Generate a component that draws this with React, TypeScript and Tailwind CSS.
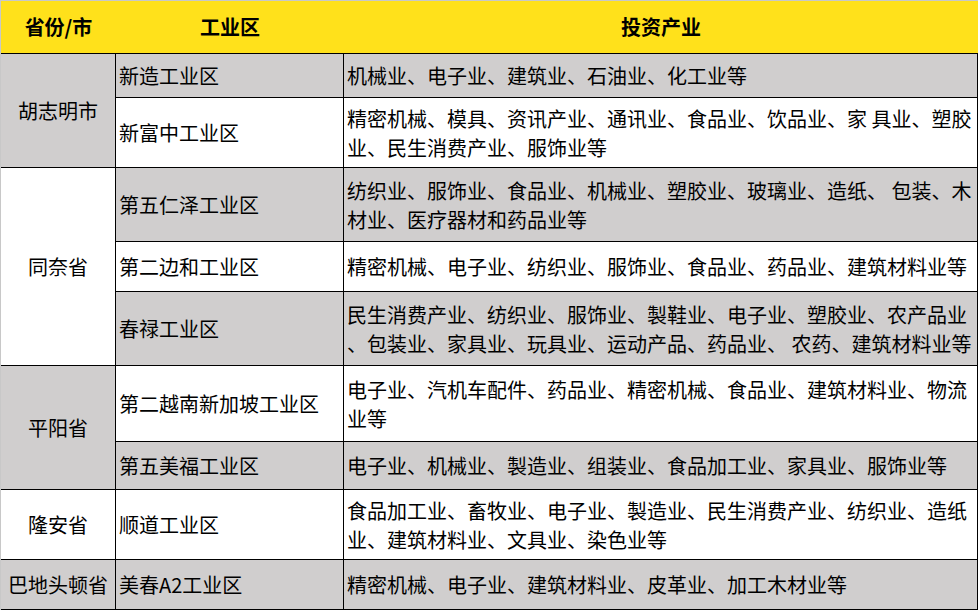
const rows = [
  { zone: '新造工业区', lines: ['机械业、电子业、建筑业、石油业、化工业等'], h: 'h-[44px]' },
  {
    zone: '新富中工业区',
    lines: ['精密机械、模具、资讯产业、通讯业、食品业、饮品业、家 具业、塑胶', '业、民生消费产业、服饰业等'],
    h: 'h-[70px]',
  },
  {
    zone: '第五仁泽工业区',
    lines: ['纺织业、服饰业、食品业、机械业、塑胶业、玻璃业、造纸、 包装、木', '材业、医疗器材和药品业等'],
    h: 'h-[74px]',
  },
  { zone: '第二边和工业区', lines: ['精密机械、电子业、纺织业、服饰业、食品业、药品业、建筑材料业等'], h: 'h-[50px]' },
  {
    zone: '春禄工业区',
    lines: ['民生消费产业、纺织业、服饰业、製鞋业、电子业、塑胶业、农产品业', '、包装业、家具业、玩具业、运动产品、药品业、 农药、建筑材料业等'],
    h: 'h-[74px]',
  },
  {
    zone: '第二越南新加坡工业区',
    lines: ['电子业、汽机车配件、药品业、精密机械、食品业、建筑材料业、物流', '业等'],
    h: 'h-[76px]',
  },
  { zone: '第五美福工业区', lines: ['电子业、机械业、製造业、组装业、食品加工业、家具业、服饰业等'], h: 'h-[48px]' },
  {
    zone: '顺道工业区',
    lines: ['食品加工业、畜牧业、电子业、製造业、民生消费产业、纺织业、造纸', '业、建筑材料业、文具业、染色业等'],
    h: 'h-[70px]',
  },
  { zone: '美春A2工业区', lines: ['精密机械、电子业、建筑材料业、皮革业、加工木材业等'], h: 'h-[50px]' },
]

const groups = [
  { name: '胡志明市', from: 0, to: 2, gray: true },
  { name: '同奈省', from: 2, to: 5, gray: false },
  { name: '平阳省', from: 5, to: 7, gray: true },
  { name: '隆安省', from: 7, to: 8, gray: false },
  { name: '巴地头顿省', from: 8, to: 9, gray: true },
]

export default function App() {
  return (
    <div
      className="w-[978px] h-[610px] bg-white text-black text-[20px] border-t border-l border-[#c8c8c8] overflow-hidden"
      style={{ fontFamily: '"Noto Sans CJK SC", "Microsoft YaHei", sans-serif' }}
    >
      {/* header */}
      <div className="flex h-[53px] bg-[#ffe11b] border-b border-black font-bold">
        <div className="w-[115px] flex items-center justify-center">省份/市</div>
        <div className="w-[228px] flex items-center justify-center">工业区</div>
        <div className="flex-1 flex items-center justify-center">投资产业</div>
      </div>

      <div className="flex">
        {/* province column */}
        <div className="w-[115px] flex flex-col">
          {groups.map((g) => (
            <div
              key={g.name}
              className={`flex items-center justify-center border-r border-b border-black ${g.gray ? 'bg-[#d0cece]' : 'bg-white'}`}
              style={{ height: rows.slice(g.from, g.to).reduce((s, r) => s + parseInt(r.h.slice(3)), 0) }}
            >
              {g.name}
            </div>
          ))}
        </div>

        {/* zones + industries */}
        <div className="flex-1 flex flex-col">
          {rows.map((r, i) => (
            <div key={r.zone} className={`flex ${r.h} ${i % 2 === 0 ? 'bg-[#d0cece]' : 'bg-white'}`}>
              <div className="w-[228px] flex items-center pl-[3px] border-r border-b border-black whitespace-nowrap">
                {r.zone}
              </div>
              <div className="flex-1 flex flex-col justify-center pl-[3px] border-r border-b border-black leading-[29px] whitespace-pre">
                {r.lines.map((l) => (
                  <div key={l}>{l}</div>
                ))}
              </div>
            </div>
          ))}
        </div>
      </div>
    </div>
  )
}
